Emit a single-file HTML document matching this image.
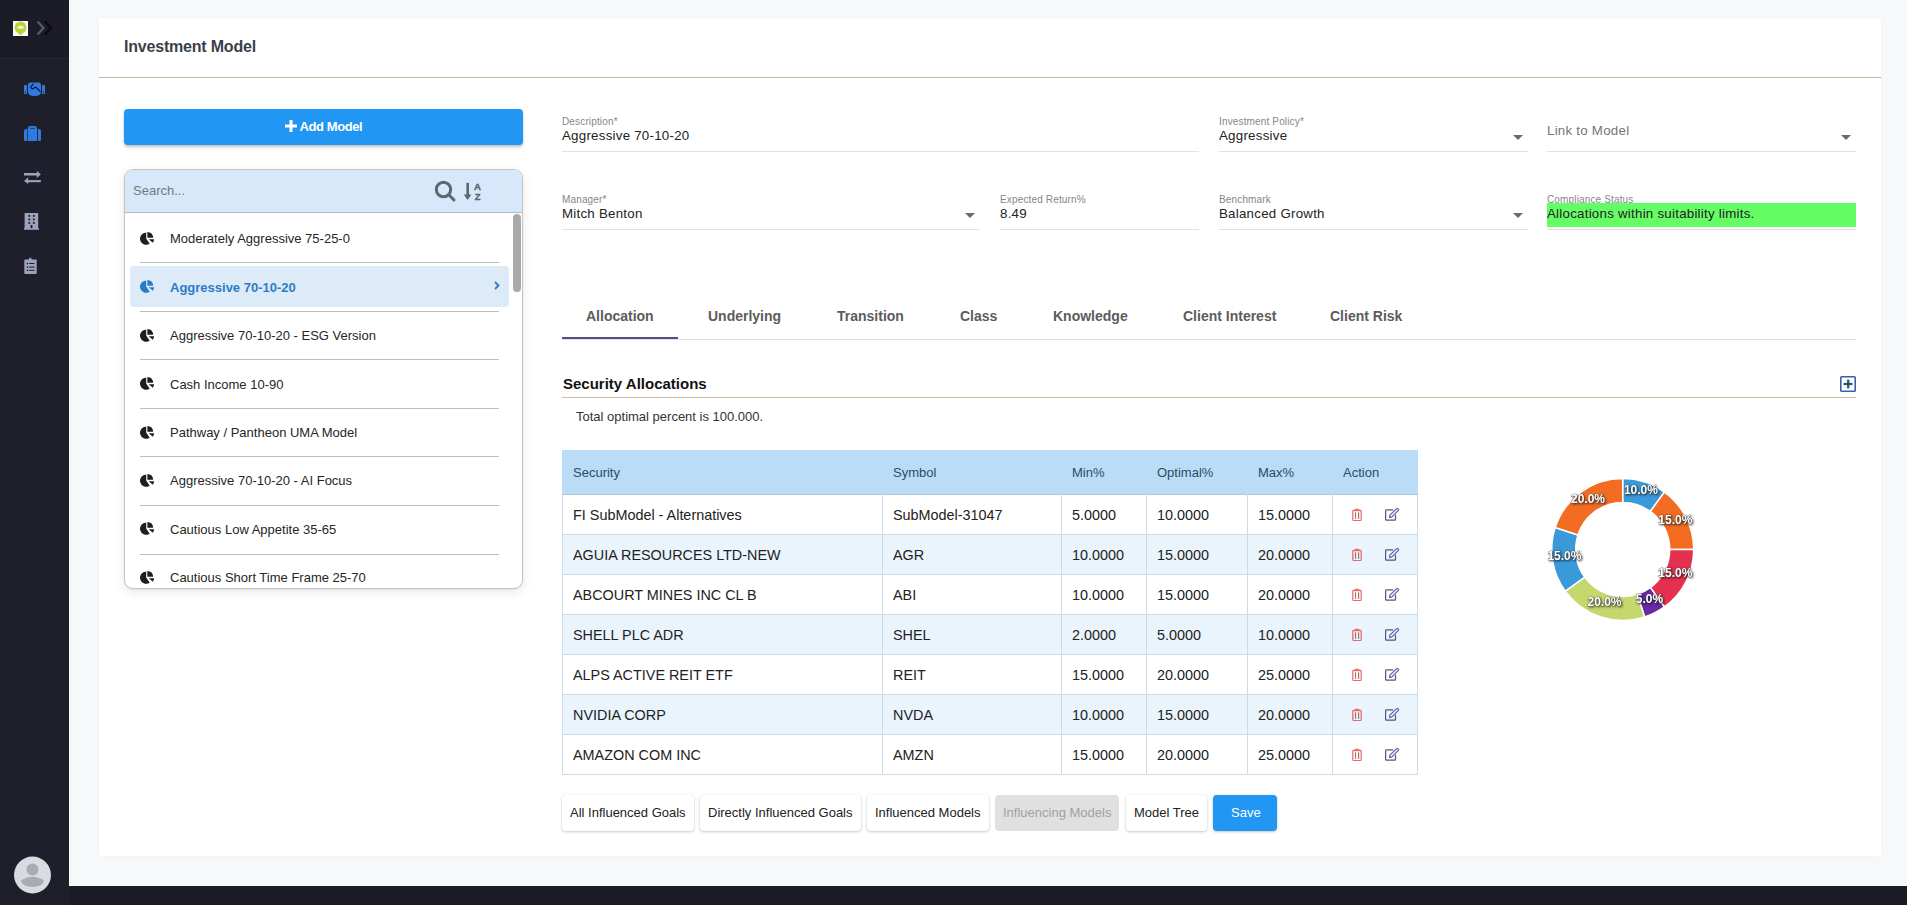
<!DOCTYPE html><html><head><meta charset="utf-8"><style>
*{box-sizing:border-box;margin:0;padding:0}
html,body{width:1907px;height:905px;overflow:hidden;background:#f7f8fa;font-family:"Liberation Sans",sans-serif;color:#222}
#sidebar{position:absolute;left:0;top:0;width:69px;height:905px;background:#1f1f2b}
#footer{position:absolute;left:69px;top:886px;width:1838px;height:19px;background:#1a1b25}
#card{position:absolute;left:99px;top:18px;width:1782px;height:838px;background:#fff;box-shadow:0 0 2px rgba(0,0,0,0.05)}
.hl{position:absolute;height:1px}
.t{position:absolute;white-space:nowrap;line-height:1}
.svg{position:absolute;overflow:visible}
.lbl{position:absolute;white-space:nowrap;line-height:1;font-size:10px;letter-spacing:0.15px;color:#868686}
.val{position:absolute;white-space:nowrap;line-height:1;font-size:13.3px;letter-spacing:0.25px;color:#222}
.ul{position:absolute;height:1px;background:#e3e3e3}
.arrow{position:absolute;width:0;height:0;border-left:5px solid transparent;border-right:5px solid transparent;border-top:5px solid #6b6b6b}
.tab{position:absolute;white-space:nowrap;line-height:1;font-size:14px;font-weight:700;color:#5c5c5c}
.cell{position:absolute;white-space:nowrap;line-height:1;font-size:14.4px;color:#222}
.th{position:absolute;white-space:nowrap;line-height:1;font-size:13px;color:#2d4b66}
.btn{position:absolute;top:795px;height:36px;border-radius:4px;background:#fff;box-shadow:0 1px 3px rgba(0,0,0,0.22),0 0 1px rgba(0,0,0,0.08)}
.btnt{position:absolute;white-space:nowrap;line-height:1;font-size:13px;color:#222}
.item{position:absolute;white-space:nowrap;line-height:1;font-size:13px;color:#262626}
</style></head><body><div id="sidebar"></div><div style="position:absolute;left:0;top:0;width:69px;height:56px;background:#1c1c27"></div><div class="hl" style="left:0;top:56px;width:69px;background:#191922"></div><div class="hl" style="left:0;top:58px;width:69px;background:#23232f"></div><div id="footer"></div><div id="card"></div><div class="hl" style="left:99px;top:77px;width:1782px;background:#c6b59f"></div><div class="t" style="left:124px;top:38.5px;font-size:16px;letter-spacing:-0.2px;font-weight:700;color:#3b3f4c">Investment Model</div><div class="svg" style="left:13px;top:21px;width:15px;height:15px;background:#fff"></div><svg class="svg" style="left:13px;top:21px" width="15" height="15" viewBox="0 0 15 15"><circle cx="7.5" cy="6.5" r="6" fill="#b8d43a"/><path d="M4 11.5 L7.5 14.2 L11 11.5 Z" fill="#b8d43a"/><path d="M4.2 7.4 Q4.2 5.3 6.2 5.4 Q7.1 4 8.8 4.9 Q10.8 4.9 10.8 6.8 L10.8 7.4 Z" fill="#f2f9d6"/></svg><svg class="svg" style="left:36px;top:20px" width="18" height="16" viewBox="0 0 18 16"><path d="M1.5 1.5 L7.5 8 L1.5 14.5" fill="none" stroke="#5a5b66" stroke-width="2.2"/><path d="M9 1.5 L15 8 L9 14.5" fill="none" stroke="#0b0b10" stroke-width="2.6"/></svg><svg class="svg" style="left:24px;top:82px" width="21" height="15" viewBox="0 0 21 15"><rect x="0" y="3" width="3" height="9" rx="0.6" fill="#2f7be0"/><rect x="18" y="3" width="3" height="9" rx="0.6" fill="#2f7be0"/><circle cx="1.5" cy="10.2" r="0.7" fill="#1f1f2b"/><circle cx="19.5" cy="10.2" r="0.7" fill="#1f1f2b"/><path d="M4 3 Q4 0.6 6.5 0.6 L14.5 0.6 Q17 0.6 17 3 L17 10 Q17 14 10.5 14 Q4 14 4 10 Z" fill="#2f7be0"/><path d="M9.3 1.8 L6.6 5.4 L8.4 7.1 L11.6 5 L16.6 9.8" fill="none" stroke="#0d1a40" stroke-width="1.2" stroke-linejoin="round"/></svg><svg class="svg" style="left:24px;top:126px" width="18" height="16" viewBox="0 0 18 16"><path d="M0 5 Q0 3 2 3 L3.2 3 L3.2 15 L1.2 15 Q0 15 0 14 Z" fill="#2f7be0"/><path d="M17 5 Q17 3 15 3 L13.9 3 L13.9 15 L15.8 15 Q17 15 17 14 Z" fill="#2f7be0"/><path d="M3.8 2.2 Q3.8 0 6 0 L10.8 0 Q13 0 13 2.2 L13 15 L3.8 15 Z" fill="#2f7be0"/><rect x="6.2" y="2" width="4.8" height="1" fill="#1a3f8a"/></svg><svg class="svg" style="left:24px;top:170px" width="18" height="15" viewBox="0 0 18 15"><rect x="0" y="3" width="13.5" height="2.5" fill="#9da2bb"/><path d="M12.8 0.9 L16.9 4.25 L12.8 7.9 Z" fill="#9da2bb"/><rect x="3.5" y="10.1" width="13.4" height="2.1" fill="#9da2bb"/><path d="M4.2 7.2 L0 10.9 L4.2 14 Z" fill="#9da2bb"/></svg><svg class="svg" style="left:24px;top:213px" width="16" height="17" viewBox="0 0 16 17"><rect x="0.6" y="0" width="13.6" height="16" fill="#9da2bb"/><rect x="0" y="15.2" width="15" height="1.6" fill="#9da2bb"/><g fill="#1f1f2b"><rect x="4.4" y="2" width="1.8" height="1.8"/><rect x="8.9" y="2" width="1.8" height="1.8"/><rect x="4.4" y="5.6" width="1.8" height="1.8"/><rect x="8.9" y="5.6" width="1.8" height="1.8"/><rect x="4.4" y="9" width="1.8" height="1.8"/><rect x="8.9" y="9" width="1.8" height="1.8"/><rect x="6.6" y="12" width="1.8" height="3.2"/></g></svg><svg class="svg" style="left:24px;top:257px" width="14" height="18" viewBox="0 0 14 18"><path d="M0.3 3.5 Q0.3 2.5 1.3 2.5 L4.5 2.5 L6.3 0.3 L8.1 2.5 L11.7 2.5 Q12.7 2.5 12.7 3.5 L12.7 16 Q12.7 17 11.7 17 L1.3 17 Q0.3 17 0.3 16 Z" fill="#9da2bb"/><g fill="#1f1f2b"><rect x="2.8" y="5.8" width="1.4" height="1.4"/><rect x="5.2" y="6" width="5.3" height="1"/><rect x="2.8" y="9.4" width="1.4" height="1.4"/><rect x="5.2" y="9.6" width="5.3" height="1"/><rect x="2.8" y="12.6" width="1.4" height="1.4"/><rect x="5.2" y="12.8" width="5.3" height="1"/></g></svg><svg class="svg" style="left:14px;top:856px" width="37" height="38" viewBox="0 0 37 38"><circle cx="18.5" cy="19" r="18.5" fill="#d9dbe1"/><circle cx="18.5" cy="13.5" r="6" fill="#a9abb2"/><path d="M7 24.5 Q18.5 17 30 24.5 Q29 31 18.5 31 Q8 31 7 24.5 Z" fill="#a9abb2"/></svg><div style="position:absolute;left:124px;top:109px;width:399px;height:36px;border-radius:4px;background:#2196f3;box-shadow:0 2px 3px rgba(0,0,0,0.25)"></div><svg class="svg" style="left:285px;top:120px" width="12" height="12" viewBox="0 0 12 12"><rect x="4.5" y="0" width="3" height="12" fill="#fff"/><rect x="0" y="4.5" width="12" height="3" fill="#fff"/></svg><div class="t" style="left:299.5px;top:120px;font-size:13px;letter-spacing:-0.4px;font-weight:700;color:#fff">Add Model</div><div style="position:absolute;left:124px;top:169px;width:399px;height:420px;border:1px solid #c4c4c4;border-radius:9px;background:#fff;box-shadow:0 3px 12px rgba(0,0,0,0.09),0 1px 2px rgba(0,0,0,0.06);overflow:hidden"><div style="position:absolute;left:0;top:0;width:397px;height:43px;background:#d6e8fa;border-bottom:1px solid #b4b9bf"></div><div style="position:absolute;left:388px;top:44px;width:8px;height:78px;border-radius:4px;background:#a9a9a9"></div></div><div class="t" style="left:133px;top:184px;font-size:13px;color:#6f7a80">Search...</div><svg class="svg" style="left:434px;top:180px" width="22" height="22" viewBox="0 0 22 22"><circle cx="9.5" cy="9.5" r="7.2" fill="none" stroke="#5b676f" stroke-width="3"/><path d="M14.8 14.8 L20 20" stroke="#5b676f" stroke-width="3" stroke-linecap="round"/></svg><svg class="svg" style="left:463px;top:182px" width="20" height="19" viewBox="0 0 20 19"><rect x="3.4" y="0.9" width="2.6" height="12" fill="#5b676f"/><path d="M0.8 12.4 L8.4 12.4 L4.6 17.9 Z" fill="#5b676f"/><text x="10.9" y="7.9" font-family="Liberation Sans" font-weight="700" font-size="9.6" fill="#5b676f" stroke="#5b676f" stroke-width="0.35">A</text><text x="11.8" y="17.8" font-family="Liberation Sans" font-weight="700" font-size="9.3" fill="#5b676f" stroke="#5b676f" stroke-width="0.35">Z</text></svg><svg class="svg" style="left:140px;top:232.0px" width="15" height="14" viewBox="0 0 15 14"><path d="M6.2 6.6 L9.67 11.74 A6.2 6.2 0 1 1 6.2 0.4 Z" fill="#1e1e1e"/><path d="M7.4 5.7 L7.4 -0.1 A5.8 5.8 0 0 1 13.2 5.7 Z" fill="#1e1e1e"/><path d="M8.7 7.2 L14.1 7.2 A5.4 5.4 0 0 1 12.8 10.7 Z" fill="#1e1e1e"/></svg><div class="item" style="left:170px;top:232.3px">Moderately Aggressive 75-25-0</div><div class="hl" style="left:140px;top:262px;width:359px;background:#bdbdbd"></div><div style="position:absolute;left:130px;top:266px;width:379px;height:41px;border-radius:4px;background:#dcebf7"></div><svg class="svg" style="left:140px;top:280.4px" width="15" height="14" viewBox="0 0 15 14"><path d="M6.2 6.6 L9.67 11.74 A6.2 6.2 0 1 1 6.2 0.4 Z" fill="#2a7bc7"/><path d="M7.4 5.7 L7.4 -0.1 A5.8 5.8 0 0 1 13.2 5.7 Z" fill="#2a7bc7"/><path d="M8.7 7.2 L14.1 7.2 A5.4 5.4 0 0 1 12.8 10.7 Z" fill="#2a7bc7"/></svg><div class="item" style="left:170px;top:280.7px;font-weight:700;color:#2d7cc4">Aggressive 70-10-20</div><svg class="svg" style="left:494px;top:281px" width="6" height="9" viewBox="0 0 6 9"><path d="M1 1 L4.5 4.5 L1 8" fill="none" stroke="#2d7cc4" stroke-width="1.8"/></svg><div class="hl" style="left:140px;top:311px;width:359px;background:#bdbdbd"></div><svg class="svg" style="left:140px;top:328.8px" width="15" height="14" viewBox="0 0 15 14"><path d="M6.2 6.6 L9.67 11.74 A6.2 6.2 0 1 1 6.2 0.4 Z" fill="#1e1e1e"/><path d="M7.4 5.7 L7.4 -0.1 A5.8 5.8 0 0 1 13.2 5.7 Z" fill="#1e1e1e"/><path d="M8.7 7.2 L14.1 7.2 A5.4 5.4 0 0 1 12.8 10.7 Z" fill="#1e1e1e"/></svg><div class="item" style="left:170px;top:329.1px">Aggressive 70-10-20 - ESG Version</div><div class="hl" style="left:140px;top:359px;width:359px;background:#bdbdbd"></div><svg class="svg" style="left:140px;top:377.2px" width="15" height="14" viewBox="0 0 15 14"><path d="M6.2 6.6 L9.67 11.74 A6.2 6.2 0 1 1 6.2 0.4 Z" fill="#1e1e1e"/><path d="M7.4 5.7 L7.4 -0.1 A5.8 5.8 0 0 1 13.2 5.7 Z" fill="#1e1e1e"/><path d="M8.7 7.2 L14.1 7.2 A5.4 5.4 0 0 1 12.8 10.7 Z" fill="#1e1e1e"/></svg><div class="item" style="left:170px;top:377.5px">Cash Income 10-90</div><div class="hl" style="left:140px;top:408px;width:359px;background:#bdbdbd"></div><svg class="svg" style="left:140px;top:425.6px" width="15" height="14" viewBox="0 0 15 14"><path d="M6.2 6.6 L9.67 11.74 A6.2 6.2 0 1 1 6.2 0.4 Z" fill="#1e1e1e"/><path d="M7.4 5.7 L7.4 -0.1 A5.8 5.8 0 0 1 13.2 5.7 Z" fill="#1e1e1e"/><path d="M8.7 7.2 L14.1 7.2 A5.4 5.4 0 0 1 12.8 10.7 Z" fill="#1e1e1e"/></svg><div class="item" style="left:170px;top:425.9px">Pathway / Pantheon UMA Model</div><div class="hl" style="left:140px;top:456px;width:359px;background:#bdbdbd"></div><svg class="svg" style="left:140px;top:474.0px" width="15" height="14" viewBox="0 0 15 14"><path d="M6.2 6.6 L9.67 11.74 A6.2 6.2 0 1 1 6.2 0.4 Z" fill="#1e1e1e"/><path d="M7.4 5.7 L7.4 -0.1 A5.8 5.8 0 0 1 13.2 5.7 Z" fill="#1e1e1e"/><path d="M8.7 7.2 L14.1 7.2 A5.4 5.4 0 0 1 12.8 10.7 Z" fill="#1e1e1e"/></svg><div class="item" style="left:170px;top:474.3px">Aggressive 70-10-20 - AI Focus</div><div class="hl" style="left:140px;top:505px;width:359px;background:#bdbdbd"></div><svg class="svg" style="left:140px;top:522.4px" width="15" height="14" viewBox="0 0 15 14"><path d="M6.2 6.6 L9.67 11.74 A6.2 6.2 0 1 1 6.2 0.4 Z" fill="#1e1e1e"/><path d="M7.4 5.7 L7.4 -0.1 A5.8 5.8 0 0 1 13.2 5.7 Z" fill="#1e1e1e"/><path d="M8.7 7.2 L14.1 7.2 A5.4 5.4 0 0 1 12.8 10.7 Z" fill="#1e1e1e"/></svg><div class="item" style="left:170px;top:522.7px">Cautious Low Appetite 35-65</div><div class="hl" style="left:140px;top:554px;width:359px;background:#bdbdbd"></div><svg class="svg" style="left:140px;top:570.8px" width="15" height="14" viewBox="0 0 15 14"><path d="M6.2 6.6 L9.67 11.74 A6.2 6.2 0 1 1 6.2 0.4 Z" fill="#1e1e1e"/><path d="M7.4 5.7 L7.4 -0.1 A5.8 5.8 0 0 1 13.2 5.7 Z" fill="#1e1e1e"/><path d="M8.7 7.2 L14.1 7.2 A5.4 5.4 0 0 1 12.8 10.7 Z" fill="#1e1e1e"/></svg><div class="item" style="left:170px;top:571.1px">Cautious Short Time Frame 25-70</div><div class="lbl" style="left:562px;top:117.1px">Description*</div><div class="val" style="left:562px;top:129.0px;">Aggressive 70-10-20</div><div class="ul" style="left:562px;top:151.3px;width:637px"></div><div class="lbl" style="left:1219px;top:117.1px">Investment Policy*</div><div class="val" style="left:1219px;top:129.0px;">Aggressive</div><div class="ul" style="left:1219px;top:151.3px;width:309px"></div><div class="arrow" style="left:1513px;top:135px"></div><div class="val" style="left:1547px;top:124.0px;color:#757575">Link to Model</div><div class="ul" style="left:1547px;top:151.3px;width:309px"></div><div class="arrow" style="left:1841px;top:135px"></div><div class="lbl" style="left:562px;top:195.1px">Manager*</div><div class="val" style="left:562px;top:207.0px;">Mitch Benton</div><div class="ul" style="left:562px;top:229.3px;width:418px"></div><div class="arrow" style="left:965px;top:213px"></div><div class="lbl" style="left:1000px;top:195.1px">Expected Return%</div><div class="val" style="left:1000px;top:207.0px;">8.49</div><div class="ul" style="left:1000px;top:229.3px;width:199px"></div><div class="lbl" style="left:1219px;top:195.1px">Benchmark</div><div class="val" style="left:1219px;top:207.0px;">Balanced Growth</div><div class="ul" style="left:1219px;top:229.3px;width:309px"></div><div class="arrow" style="left:1513px;top:213px"></div><div class="lbl" style="left:1547px;top:195.1px">Compliance Status</div><div style="position:absolute;left:1547px;top:203px;width:309px;height:24px;background:#66fc66"></div><div class="val" style="left:1547px;top:207.0px;">Allocations within suitability limits.</div><div class="ul" style="left:1547px;top:229.3px;width:309px"></div><div class="hl" style="left:562px;top:339px;width:1294px;background:#e0e0e0"></div><div style="position:absolute;left:562px;top:337px;width:116px;height:2px;background:#4d5188"></div><div class="tab" style="left:586px;top:308.6px">Allocation</div><div class="tab" style="left:708px;top:308.6px">Underlying</div><div class="tab" style="left:837px;top:308.6px">Transition</div><div class="tab" style="left:960px;top:308.6px">Class</div><div class="tab" style="left:1053px;top:308.6px">Knowledge</div><div class="tab" style="left:1183px;top:308.6px">Client Interest</div><div class="tab" style="left:1330px;top:308.6px">Client Risk</div><div class="t" style="left:563px;top:376px;font-size:15px;font-weight:700;color:#111">Security Allocations</div><div class="hl" style="left:562px;top:397px;width:1294px;background:#cdbba3"></div><svg class="svg" style="left:1840px;top:376px" width="16" height="16" viewBox="0 0 16 16"><rect x="0.8" y="0.8" width="14.4" height="14.4" rx="0.8" fill="none" stroke="#3462ab" stroke-width="1.6"/><rect x="7.1" y="3.6" width="2.2" height="8.8" fill="#244d78"/><rect x="3.6" y="6.9" width="8.8" height="2.2" fill="#244d78"/></svg><div class="t" style="left:576px;top:410.2px;font-size:13px;color:#333">Total optimal percent is 100.000.</div><div style="position:absolute;left:562px;top:450px;width:856px;height:45px;background:#bbdcf7"></div><div style="position:absolute;left:562px;top:494.5px;width:856px;height:40px;background:#ffffff"></div><div style="position:absolute;left:562px;top:534.5px;width:856px;height:40px;background:#eaf4fd"></div><div style="position:absolute;left:562px;top:574.5px;width:856px;height:40px;background:#ffffff"></div><div style="position:absolute;left:562px;top:614.5px;width:856px;height:40px;background:#eaf4fd"></div><div style="position:absolute;left:562px;top:654.5px;width:856px;height:40px;background:#ffffff"></div><div style="position:absolute;left:562px;top:694.5px;width:856px;height:40px;background:#eaf4fd"></div><div style="position:absolute;left:562px;top:734.5px;width:856px;height:40px;background:#ffffff"></div><div class="hl" style="left:562px;top:494px;width:856px;background:#abc8df"></div><div class="hl" style="left:562px;top:534px;width:856px;background:#cbdbea"></div><div class="hl" style="left:562px;top:574px;width:856px;background:#cbdbea"></div><div class="hl" style="left:562px;top:614px;width:856px;background:#cbdbea"></div><div class="hl" style="left:562px;top:654px;width:856px;background:#cbdbea"></div><div class="hl" style="left:562px;top:694px;width:856px;background:#cbdbea"></div><div class="hl" style="left:562px;top:734px;width:856px;background:#cbdbea"></div><div class="hl" style="left:562px;top:774px;width:856px;background:#cbdbea"></div><div style="position:absolute;left:562px;top:495px;width:1px;height:280px;background:#cbdbea"></div><div style="position:absolute;left:882px;top:495px;width:1px;height:280px;background:#cbdbea"></div><div style="position:absolute;left:1061px;top:495px;width:1px;height:280px;background:#cbdbea"></div><div style="position:absolute;left:1146px;top:495px;width:1px;height:280px;background:#cbdbea"></div><div style="position:absolute;left:1247px;top:495px;width:1px;height:280px;background:#cbdbea"></div><div style="position:absolute;left:1332px;top:495px;width:1px;height:280px;background:#cbdbea"></div><div style="position:absolute;left:1417px;top:495px;width:1px;height:280px;background:#cbdbea"></div><div style="position:absolute;left:882px;top:450px;width:1px;height:45px;background:#c4dcf1"></div><div style="position:absolute;left:1061px;top:450px;width:1px;height:45px;background:#c4dcf1"></div><div style="position:absolute;left:1146px;top:450px;width:1px;height:45px;background:#c4dcf1"></div><div style="position:absolute;left:1247px;top:450px;width:1px;height:45px;background:#c4dcf1"></div><div style="position:absolute;left:1332px;top:450px;width:1px;height:45px;background:#c4dcf1"></div><div class="th" style="left:573px;top:465.7px">Security</div><div class="th" style="left:893px;top:465.7px">Symbol</div><div class="th" style="left:1072px;top:465.7px">Min%</div><div class="th" style="left:1157px;top:465.7px">Optimal%</div><div class="th" style="left:1258px;top:465.7px">Max%</div><div class="th" style="left:1343px;top:465.7px">Action</div><div class="cell" style="left:573px;top:508.3px">FI SubModel - Alternatives</div><div class="cell" style="left:893px;top:508.3px">SubModel-31047</div><div class="cell" style="left:1072px;top:508.3px">5.0000</div><div class="cell" style="left:1157px;top:508.3px">10.0000</div><div class="cell" style="left:1258px;top:508.3px">15.0000</div><svg class="svg" style="left:1352px;top:508px" width="11" height="14" viewBox="0 0 11 14"><path d="M0.2 3.2 Q0.2 1.9 1.5 1.7 L3.1 1.3 Q5 -0.4 6.9 1.3 L8.5 1.7 Q9.8 1.9 9.8 3.2 Z" fill="#ea6c70"/><path d="M0.8 3 L0.8 11.4 Q0.8 12.5 1.9 12.5 L8.1 12.5 Q9.2 12.5 9.2 11.4 L9.2 3" fill="none" stroke="#e4676b" stroke-width="1.2"/><rect x="2.9" y="4.3" width="1.2" height="6.6" fill="#b56a62"/><rect x="6" y="4.3" width="1.2" height="6.6" fill="#b56a62"/></svg><svg class="svg" style="left:1385px;top:508px" width="15" height="14" viewBox="0 0 15 14"><path d="M8 1.9 L1.5 1.9 Q0.6 1.9 0.6 2.8 L0.6 11.3 Q0.6 12.2 1.5 12.2 L9.6 12.2 Q10.5 12.2 10.5 11.3 L10.5 6.8" fill="none" stroke="#4f5572" stroke-width="1.2"/><path d="M4.5 9.5 L5 6.8 L11.7 0.7 Q12.3 0.2 12.9 0.7 L13.5 1.3 Q14 1.9 13.4 2.4 L7 8.9 Z" fill="#eaf2ff" stroke="#5258aa" stroke-width="1.1" stroke-linejoin="round"/></svg><div class="cell" style="left:573px;top:548.3px">AGUIA RESOURCES LTD-NEW</div><div class="cell" style="left:893px;top:548.3px">AGR</div><div class="cell" style="left:1072px;top:548.3px">10.0000</div><div class="cell" style="left:1157px;top:548.3px">15.0000</div><div class="cell" style="left:1258px;top:548.3px">20.0000</div><svg class="svg" style="left:1352px;top:548px" width="11" height="14" viewBox="0 0 11 14"><path d="M0.2 3.2 Q0.2 1.9 1.5 1.7 L3.1 1.3 Q5 -0.4 6.9 1.3 L8.5 1.7 Q9.8 1.9 9.8 3.2 Z" fill="#ea6c70"/><path d="M0.8 3 L0.8 11.4 Q0.8 12.5 1.9 12.5 L8.1 12.5 Q9.2 12.5 9.2 11.4 L9.2 3" fill="none" stroke="#e4676b" stroke-width="1.2"/><rect x="2.9" y="4.3" width="1.2" height="6.6" fill="#b56a62"/><rect x="6" y="4.3" width="1.2" height="6.6" fill="#b56a62"/></svg><svg class="svg" style="left:1385px;top:548px" width="15" height="14" viewBox="0 0 15 14"><path d="M8 1.9 L1.5 1.9 Q0.6 1.9 0.6 2.8 L0.6 11.3 Q0.6 12.2 1.5 12.2 L9.6 12.2 Q10.5 12.2 10.5 11.3 L10.5 6.8" fill="none" stroke="#4f5572" stroke-width="1.2"/><path d="M4.5 9.5 L5 6.8 L11.7 0.7 Q12.3 0.2 12.9 0.7 L13.5 1.3 Q14 1.9 13.4 2.4 L7 8.9 Z" fill="#eaf2ff" stroke="#5258aa" stroke-width="1.1" stroke-linejoin="round"/></svg><div class="cell" style="left:573px;top:588.3px">ABCOURT MINES INC CL B</div><div class="cell" style="left:893px;top:588.3px">ABI</div><div class="cell" style="left:1072px;top:588.3px">10.0000</div><div class="cell" style="left:1157px;top:588.3px">15.0000</div><div class="cell" style="left:1258px;top:588.3px">20.0000</div><svg class="svg" style="left:1352px;top:588px" width="11" height="14" viewBox="0 0 11 14"><path d="M0.2 3.2 Q0.2 1.9 1.5 1.7 L3.1 1.3 Q5 -0.4 6.9 1.3 L8.5 1.7 Q9.8 1.9 9.8 3.2 Z" fill="#ea6c70"/><path d="M0.8 3 L0.8 11.4 Q0.8 12.5 1.9 12.5 L8.1 12.5 Q9.2 12.5 9.2 11.4 L9.2 3" fill="none" stroke="#e4676b" stroke-width="1.2"/><rect x="2.9" y="4.3" width="1.2" height="6.6" fill="#b56a62"/><rect x="6" y="4.3" width="1.2" height="6.6" fill="#b56a62"/></svg><svg class="svg" style="left:1385px;top:588px" width="15" height="14" viewBox="0 0 15 14"><path d="M8 1.9 L1.5 1.9 Q0.6 1.9 0.6 2.8 L0.6 11.3 Q0.6 12.2 1.5 12.2 L9.6 12.2 Q10.5 12.2 10.5 11.3 L10.5 6.8" fill="none" stroke="#4f5572" stroke-width="1.2"/><path d="M4.5 9.5 L5 6.8 L11.7 0.7 Q12.3 0.2 12.9 0.7 L13.5 1.3 Q14 1.9 13.4 2.4 L7 8.9 Z" fill="#eaf2ff" stroke="#5258aa" stroke-width="1.1" stroke-linejoin="round"/></svg><div class="cell" style="left:573px;top:628.3px">SHELL PLC ADR</div><div class="cell" style="left:893px;top:628.3px">SHEL</div><div class="cell" style="left:1072px;top:628.3px">2.0000</div><div class="cell" style="left:1157px;top:628.3px">5.0000</div><div class="cell" style="left:1258px;top:628.3px">10.0000</div><svg class="svg" style="left:1352px;top:628px" width="11" height="14" viewBox="0 0 11 14"><path d="M0.2 3.2 Q0.2 1.9 1.5 1.7 L3.1 1.3 Q5 -0.4 6.9 1.3 L8.5 1.7 Q9.8 1.9 9.8 3.2 Z" fill="#ea6c70"/><path d="M0.8 3 L0.8 11.4 Q0.8 12.5 1.9 12.5 L8.1 12.5 Q9.2 12.5 9.2 11.4 L9.2 3" fill="none" stroke="#e4676b" stroke-width="1.2"/><rect x="2.9" y="4.3" width="1.2" height="6.6" fill="#b56a62"/><rect x="6" y="4.3" width="1.2" height="6.6" fill="#b56a62"/></svg><svg class="svg" style="left:1385px;top:628px" width="15" height="14" viewBox="0 0 15 14"><path d="M8 1.9 L1.5 1.9 Q0.6 1.9 0.6 2.8 L0.6 11.3 Q0.6 12.2 1.5 12.2 L9.6 12.2 Q10.5 12.2 10.5 11.3 L10.5 6.8" fill="none" stroke="#4f5572" stroke-width="1.2"/><path d="M4.5 9.5 L5 6.8 L11.7 0.7 Q12.3 0.2 12.9 0.7 L13.5 1.3 Q14 1.9 13.4 2.4 L7 8.9 Z" fill="#eaf2ff" stroke="#5258aa" stroke-width="1.1" stroke-linejoin="round"/></svg><div class="cell" style="left:573px;top:668.3px">ALPS ACTIVE REIT ETF</div><div class="cell" style="left:893px;top:668.3px">REIT</div><div class="cell" style="left:1072px;top:668.3px">15.0000</div><div class="cell" style="left:1157px;top:668.3px">20.0000</div><div class="cell" style="left:1258px;top:668.3px">25.0000</div><svg class="svg" style="left:1352px;top:668px" width="11" height="14" viewBox="0 0 11 14"><path d="M0.2 3.2 Q0.2 1.9 1.5 1.7 L3.1 1.3 Q5 -0.4 6.9 1.3 L8.5 1.7 Q9.8 1.9 9.8 3.2 Z" fill="#ea6c70"/><path d="M0.8 3 L0.8 11.4 Q0.8 12.5 1.9 12.5 L8.1 12.5 Q9.2 12.5 9.2 11.4 L9.2 3" fill="none" stroke="#e4676b" stroke-width="1.2"/><rect x="2.9" y="4.3" width="1.2" height="6.6" fill="#b56a62"/><rect x="6" y="4.3" width="1.2" height="6.6" fill="#b56a62"/></svg><svg class="svg" style="left:1385px;top:668px" width="15" height="14" viewBox="0 0 15 14"><path d="M8 1.9 L1.5 1.9 Q0.6 1.9 0.6 2.8 L0.6 11.3 Q0.6 12.2 1.5 12.2 L9.6 12.2 Q10.5 12.2 10.5 11.3 L10.5 6.8" fill="none" stroke="#4f5572" stroke-width="1.2"/><path d="M4.5 9.5 L5 6.8 L11.7 0.7 Q12.3 0.2 12.9 0.7 L13.5 1.3 Q14 1.9 13.4 2.4 L7 8.9 Z" fill="#eaf2ff" stroke="#5258aa" stroke-width="1.1" stroke-linejoin="round"/></svg><div class="cell" style="left:573px;top:708.3px">NVIDIA CORP</div><div class="cell" style="left:893px;top:708.3px">NVDA</div><div class="cell" style="left:1072px;top:708.3px">10.0000</div><div class="cell" style="left:1157px;top:708.3px">15.0000</div><div class="cell" style="left:1258px;top:708.3px">20.0000</div><svg class="svg" style="left:1352px;top:708px" width="11" height="14" viewBox="0 0 11 14"><path d="M0.2 3.2 Q0.2 1.9 1.5 1.7 L3.1 1.3 Q5 -0.4 6.9 1.3 L8.5 1.7 Q9.8 1.9 9.8 3.2 Z" fill="#ea6c70"/><path d="M0.8 3 L0.8 11.4 Q0.8 12.5 1.9 12.5 L8.1 12.5 Q9.2 12.5 9.2 11.4 L9.2 3" fill="none" stroke="#e4676b" stroke-width="1.2"/><rect x="2.9" y="4.3" width="1.2" height="6.6" fill="#b56a62"/><rect x="6" y="4.3" width="1.2" height="6.6" fill="#b56a62"/></svg><svg class="svg" style="left:1385px;top:708px" width="15" height="14" viewBox="0 0 15 14"><path d="M8 1.9 L1.5 1.9 Q0.6 1.9 0.6 2.8 L0.6 11.3 Q0.6 12.2 1.5 12.2 L9.6 12.2 Q10.5 12.2 10.5 11.3 L10.5 6.8" fill="none" stroke="#4f5572" stroke-width="1.2"/><path d="M4.5 9.5 L5 6.8 L11.7 0.7 Q12.3 0.2 12.9 0.7 L13.5 1.3 Q14 1.9 13.4 2.4 L7 8.9 Z" fill="#eaf2ff" stroke="#5258aa" stroke-width="1.1" stroke-linejoin="round"/></svg><div class="cell" style="left:573px;top:748.3px">AMAZON COM INC</div><div class="cell" style="left:893px;top:748.3px">AMZN</div><div class="cell" style="left:1072px;top:748.3px">15.0000</div><div class="cell" style="left:1157px;top:748.3px">20.0000</div><div class="cell" style="left:1258px;top:748.3px">25.0000</div><svg class="svg" style="left:1352px;top:748px" width="11" height="14" viewBox="0 0 11 14"><path d="M0.2 3.2 Q0.2 1.9 1.5 1.7 L3.1 1.3 Q5 -0.4 6.9 1.3 L8.5 1.7 Q9.8 1.9 9.8 3.2 Z" fill="#ea6c70"/><path d="M0.8 3 L0.8 11.4 Q0.8 12.5 1.9 12.5 L8.1 12.5 Q9.2 12.5 9.2 11.4 L9.2 3" fill="none" stroke="#e4676b" stroke-width="1.2"/><rect x="2.9" y="4.3" width="1.2" height="6.6" fill="#b56a62"/><rect x="6" y="4.3" width="1.2" height="6.6" fill="#b56a62"/></svg><svg class="svg" style="left:1385px;top:748px" width="15" height="14" viewBox="0 0 15 14"><path d="M8 1.9 L1.5 1.9 Q0.6 1.9 0.6 2.8 L0.6 11.3 Q0.6 12.2 1.5 12.2 L9.6 12.2 Q10.5 12.2 10.5 11.3 L10.5 6.8" fill="none" stroke="#4f5572" stroke-width="1.2"/><path d="M4.5 9.5 L5 6.8 L11.7 0.7 Q12.3 0.2 12.9 0.7 L13.5 1.3 Q14 1.9 13.4 2.4 L7 8.9 Z" fill="#eaf2ff" stroke="#5258aa" stroke-width="1.1" stroke-linejoin="round"/></svg><svg class="svg" style="left:0;top:0" width="1907" height="905"><path d="M1622.70 478.50 A71 71 0 0 1 1664.43 492.06 L1650.33 511.48 A47 47 0 0 0 1622.70 502.50 Z" fill="#3a9ad9" stroke="#fff" stroke-width="1.5"/><path d="M1664.43 492.06 A71 71 0 0 1 1693.70 549.50 L1669.70 549.50 A47 47 0 0 0 1650.33 511.48 Z" fill="#f26d21" stroke="#fff" stroke-width="1.5"/><path d="M1693.70 549.50 A71 71 0 0 1 1664.43 606.94 L1650.33 587.52 A47 47 0 0 0 1669.70 549.50 Z" fill="#e5304f" stroke="#fff" stroke-width="1.5"/><path d="M1664.43 606.94 A71 71 0 0 1 1644.64 617.03 L1637.22 594.20 A47 47 0 0 0 1650.33 587.52 Z" fill="#6a2aa3" stroke="#fff" stroke-width="1.5"/><path d="M1644.64 617.03 A71 71 0 0 1 1565.26 591.23 L1584.68 577.13 A47 47 0 0 0 1637.22 594.20 Z" fill="#c5d86d" stroke="#fff" stroke-width="1.5"/><path d="M1565.26 591.23 A71 71 0 0 1 1555.17 527.56 L1578.00 534.98 A47 47 0 0 0 1584.68 577.13 Z" fill="#3a9ad9" stroke="#fff" stroke-width="1.5"/><path d="M1555.17 527.56 A71 71 0 0 1 1622.70 478.50 L1622.70 502.50 A47 47 0 0 0 1578.00 534.98 Z" fill="#f26d21" stroke="#fff" stroke-width="1.5"/><text x="1640.9" y="494.2" text-anchor="middle" font-family="Liberation Sans" font-weight="700" font-size="12" fill="#fff" stroke="#444" stroke-width="0.7" paint-order="stroke" style="filter:drop-shadow(1px 1px 1px rgba(0,0,0,0.6))">10.0%</text><text x="1675.3" y="523.5" text-anchor="middle" font-family="Liberation Sans" font-weight="700" font-size="12" fill="#fff" stroke="#444" stroke-width="0.7" paint-order="stroke" style="filter:drop-shadow(1px 1px 1px rgba(0,0,0,0.6))">15.0%</text><text x="1675.3" y="577.1" text-anchor="middle" font-family="Liberation Sans" font-weight="700" font-size="12" fill="#fff" stroke="#444" stroke-width="0.7" paint-order="stroke" style="filter:drop-shadow(1px 1px 1px rgba(0,0,0,0.6))">15.0%</text><text x="1649.5" y="602.9" text-anchor="middle" font-family="Liberation Sans" font-weight="700" font-size="12" fill="#fff" stroke="#444" stroke-width="0.7" paint-order="stroke" style="filter:drop-shadow(1px 1px 1px rgba(0,0,0,0.6))">5.0%</text><text x="1604.5" y="606.4" text-anchor="middle" font-family="Liberation Sans" font-weight="700" font-size="12" fill="#fff" stroke="#444" stroke-width="0.7" paint-order="stroke" style="filter:drop-shadow(1px 1px 1px rgba(0,0,0,0.6))">20.0%</text><text x="1564.4" y="559.5" text-anchor="middle" font-family="Liberation Sans" font-weight="700" font-size="12" fill="#fff" stroke="#444" stroke-width="0.7" paint-order="stroke" style="filter:drop-shadow(1px 1px 1px rgba(0,0,0,0.6))">15.0%</text><text x="1588.0" y="502.6" text-anchor="middle" font-family="Liberation Sans" font-weight="700" font-size="12" fill="#fff" stroke="#444" stroke-width="0.7" paint-order="stroke" style="filter:drop-shadow(1px 1px 1px rgba(0,0,0,0.6))">20.0%</text></svg><div class="btn" style="left:562px;width:132px"></div><div class="btnt" style="left:570px;top:806px">All Influenced Goals</div><div class="btn" style="left:700px;width:161px"></div><div class="btnt" style="left:708px;top:806px">Directly Influenced Goals</div><div class="btn" style="left:867px;width:122px"></div><div class="btnt" style="left:875px;top:806px">Influenced Models</div><div class="btn" style="left:995px;width:124px;background:#e0e0e0;box-shadow:none"></div><div class="btnt" style="left:1003px;top:806px;color:#a2a2a2">Influencing Models</div><div class="btn" style="left:1126px;width:81px"></div><div class="btnt" style="left:1134px;top:806px">Model Tree</div><div class="btn" style="left:1213px;width:64px;background:#2196f3"></div><div class="btnt" style="left:1231px;top:806px;color:#fff">Save</div></body></html>
